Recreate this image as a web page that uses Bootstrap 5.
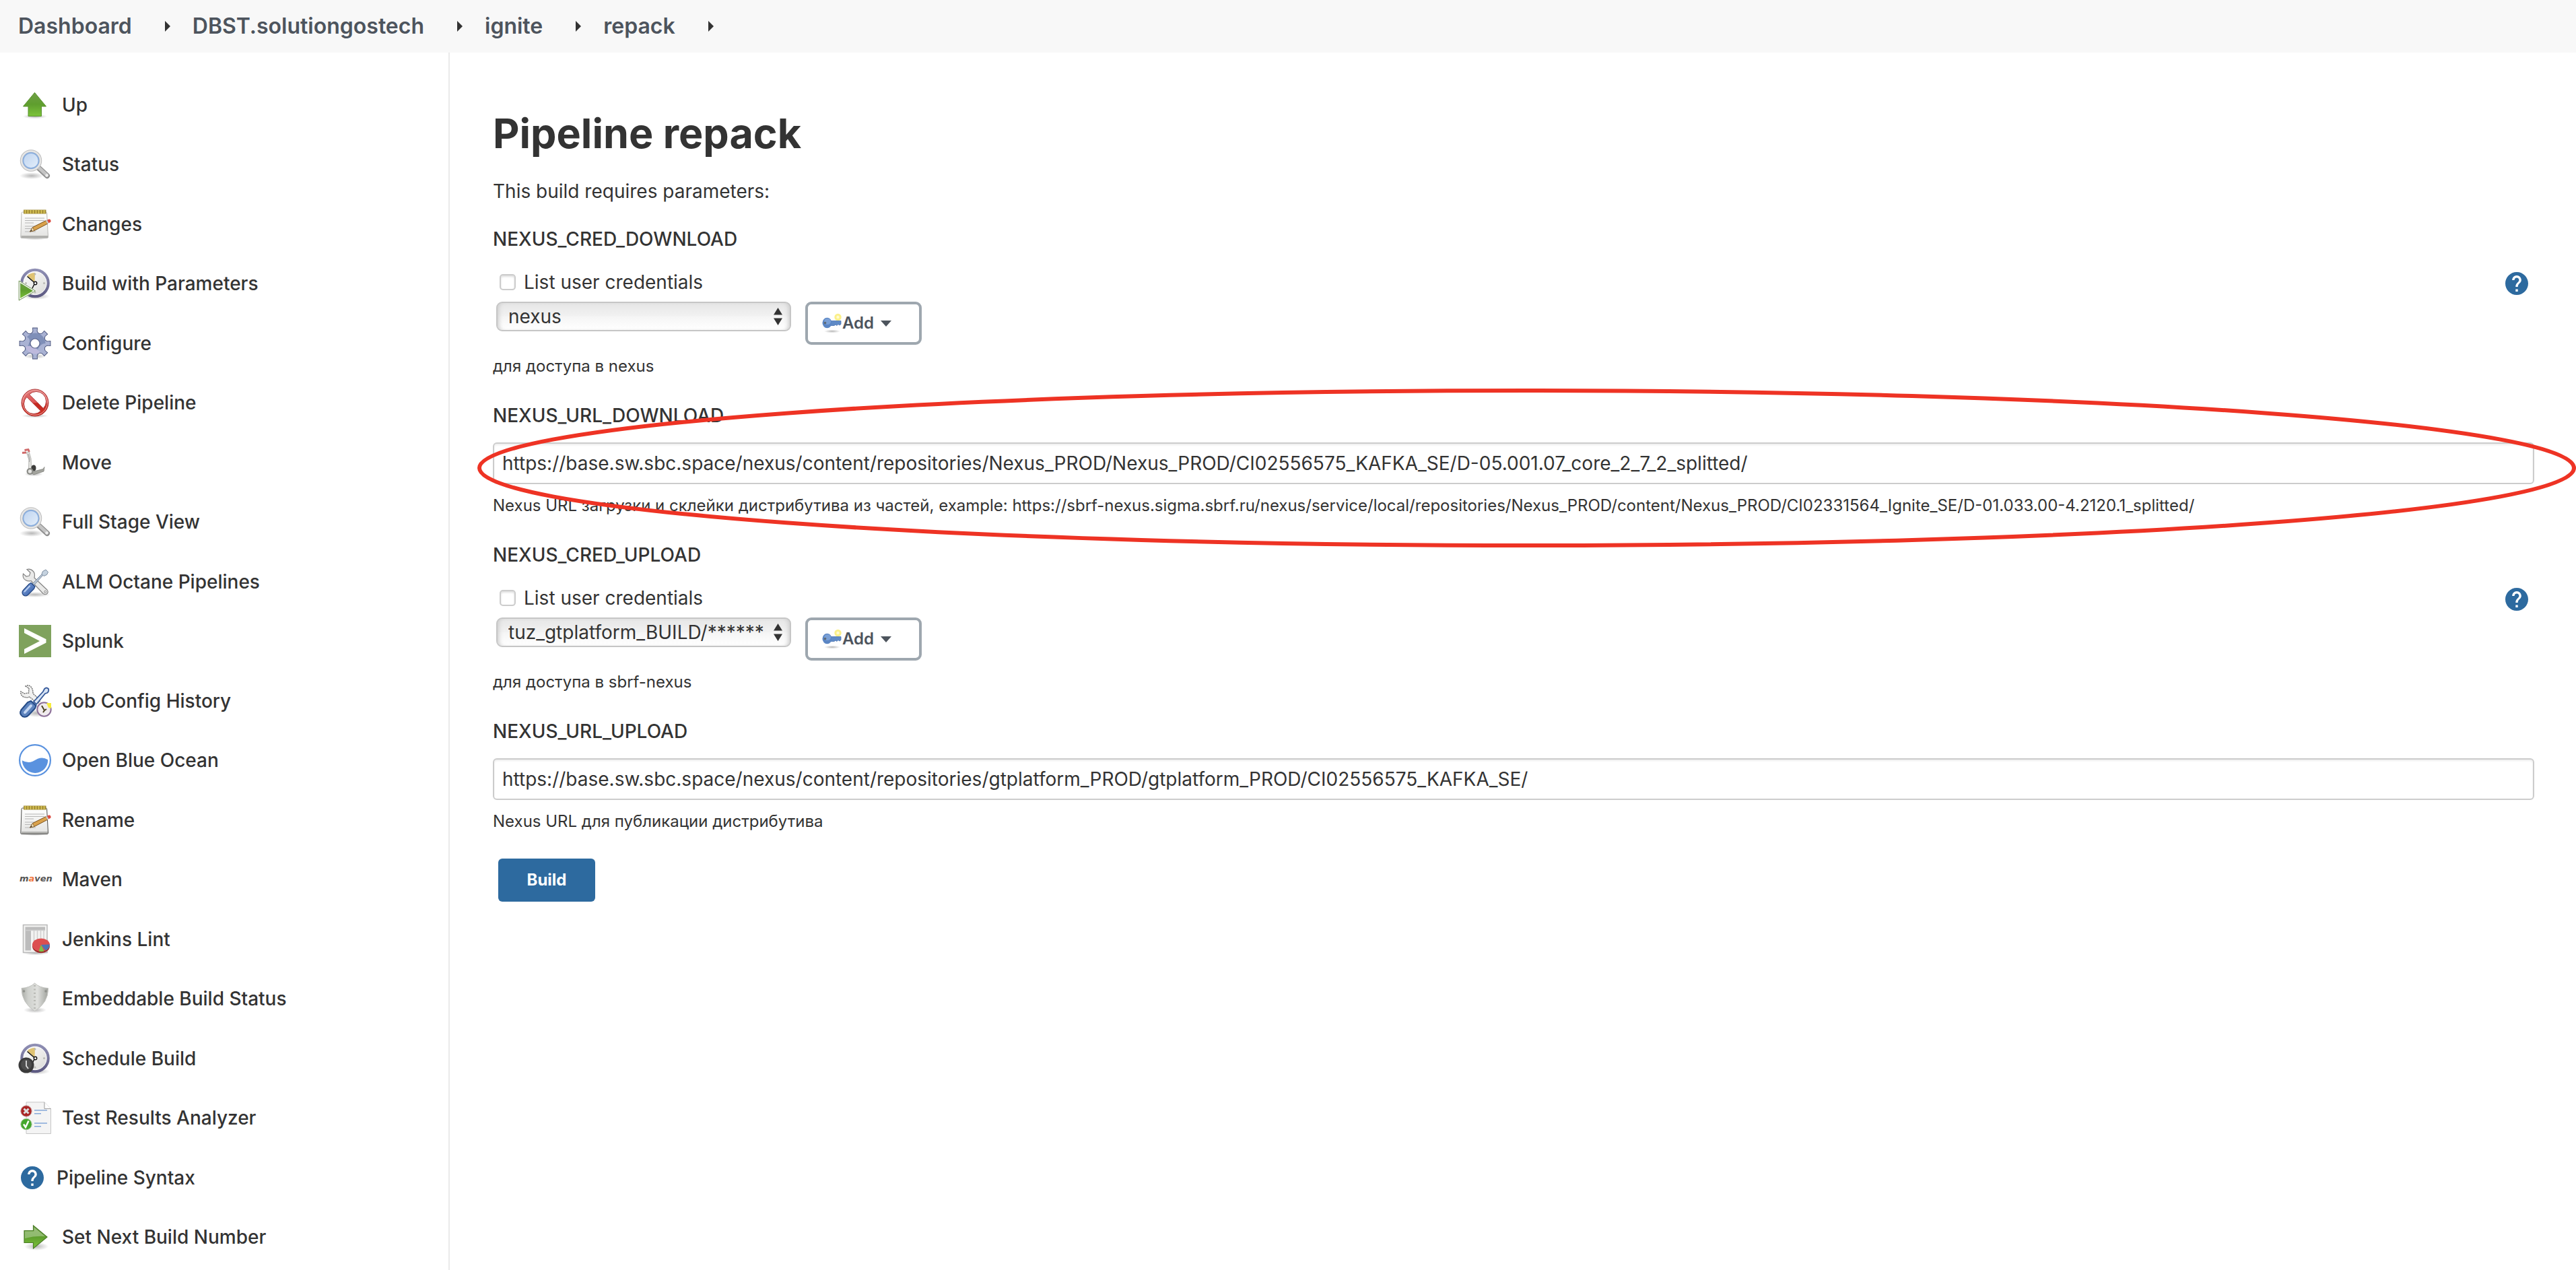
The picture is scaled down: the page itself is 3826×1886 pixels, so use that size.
<!DOCTYPE html>
<html lang="en">
<head>
<meta charset="utf-8">
<meta name="viewport" content="width=device-width, initial-scale=1">
<title>Pipeline repack</title>
<link href="https://cdn.jsdelivr.net/npm/bootstrap@5.3.0/dist/css/bootstrap.min.css" rel="stylesheet">
<style>
  body { font-family: Inter, "Noto Sans", sans-serif; font-size: 28px; line-height: 40px; color: #333; background: #fff; }
  a { color: inherit; text-decoration: none; }
  .topbar { background: #f8f8f8; height: 78px; padding: 0 27px; font-size: 32px; font-weight: 600; color: #4d545d; }
  .crumb-arrow { width: 8px; height: 16px; margin: 0 33px 0 49px; fill: #333; }
  .side-panel { flex: 0 0 668px; border-right: 2px solid #eaeaea; padding: 33px 0 0 28px; font-weight: 500; }
  .task { height: 88px; gap: 16px; }
  .task:nth-child(odd) { height: 89px; }
  .task-icon { width: 48px; height: 48px; flex: none; overflow: visible; }
  .task-icon-help { width: 40px; height: 34px; flex: none; }
  .main-panel { padding: 80px 62px 60px 64px; min-width: 0; }
  h1 { font-size: 61px; line-height: 80px; font-weight: 700; margin-bottom: 26px; }
  .intro { margin-bottom: 31px; }
  .param { margin-bottom: 35px; position: relative; }
  .param-name { display: block; font-weight: 500; margin-bottom: 20px; }
  .param-note { font-size: 24px; line-height: 36px; margin-top: 14px; }
  .cred-area { padding: 4px 9px 0 5px; }
  .cred-check { gap: 12px; margin-left: 5px; }
  .cred-check .form-check-input { width: 24px; height: 24px; margin: 0; border: 2px solid #ccc; border-radius: 5px; box-shadow: inset 0 2px 3px #ddd; }
  .cred-controls { gap: 21px; margin-top: 9px; }
  .select-box { position: relative; width: 438px; }
  .select-box select { appearance: none; width: 100%; height: 44px; padding: 0 36px 0 16px; border: 2px solid #c6c6c6; border-radius: 9px; color: #333; line-height: 36px;
    background: linear-gradient(#e6e6e6, #f2f2f2 50%, #f5f5f5 51%, #fff); box-shadow: inset 6px 0 6px -4px #ccc, inset -6px 0 6px -4px #ccc; }
  .select-arrows { position: absolute; right: 13px; top: 9px; width: 13px; height: 26px; pointer-events: none; fill: #333; }
  .add-btn { width: 173px; height: 64px; padding: 0 0 0 21px; border: 4px solid #9ea7af; border-radius: 9px; color: #4d545d; font-size: 24px; font-weight: 600; }
  .add-btn svg { flex: none; }
  .add-btn .caret { margin-left: 10px; }
  .help-link svg { display: block; margin-top: 5px; }
  .param .form-control { height: 62px; padding: 0 12px; font-size: 28px; line-height: 40px; color: #333; border: 2px solid #ccc; border-radius: 6px; box-shadow: inset 0 2px 3px #eee; }
  .highlight-ring { position: absolute; left: -23px; right: -62px; top: -20px; bottom: -44px; pointer-events: none; }
  .highlight-ring svg { width: 100%; height: 100%; display: block; }
  .highlight-ring ellipse { rx: calc(50% - 3px); ry: calc(50% - 3px); fill: none; stroke: #ee3324; stroke-width: 6px; }
  .build-btn { width: 144px; height: 64px; margin: 2px 0 0 8px; padding: 0; border: 0; border-radius: 6px; background: #2d6a9f; color: #fff; font-size: 24px; font-weight: 700; }
</style>
<script src="https://cdn.jsdelivr.net/npm/bootstrap@5.3.0/dist/js/bootstrap.bundle.min.js"></script>
</head>
<body class="d-flex flex-column min-vh-100">

<svg width="0" height="0" class="position-absolute" aria-hidden="true">
  <defs>
    <linearGradient id="gGreen" x1="0" y1="0" x2="0" y2="1"><stop offset="0" stop-color="#6f9f45"/><stop offset=".5" stop-color="#5f9e2e"/><stop offset="1" stop-color="#7cc43a"/></linearGradient>
    <linearGradient id="gLens" x1="0" y1="0" x2="1" y2="1"><stop offset="0" stop-color="#b9d0ee"/><stop offset="1" stop-color="#e9f2fc"/></linearGradient>
    <linearGradient id="gPaper" x1="0" y1="0" x2="0" y2="1"><stop offset="0" stop-color="#fff"/><stop offset="1" stop-color="#e2e2e0"/></linearGradient>
    <linearGradient id="gRing" x1="0" y1="0" x2="0" y2="1"><stop offset="0" stop-color="#8f8fb4"/><stop offset="1" stop-color="#5d5a82"/></linearGradient>
    <linearGradient id="gFace" x1="0" y1="0" x2="1" y2="1"><stop offset="0" stop-color="#fff"/><stop offset="1" stop-color="#d9d9d6"/></linearGradient>
    <linearGradient id="gRed" x1="0" y1="0" x2="0" y2="1"><stop offset="0" stop-color="#e07a7a"/><stop offset=".5" stop-color="#d55"/><stop offset=".52" stop-color="#c4281f"/><stop offset="1" stop-color="#cc2f25"/></linearGradient>
    <linearGradient id="gShield" x1="0" y1="0" x2="1" y2="0"><stop offset="0" stop-color="#a9aba6"/><stop offset=".25" stop-color="#cfd1cd"/><stop offset=".6" stop-color="#dfe0dd"/><stop offset="1" stop-color="#9fa19c"/></linearGradient>
    <linearGradient id="gDriver" x1="0" y1="0" x2="1" y2="1"><stop offset="0" stop-color="#86a8de"/><stop offset="1" stop-color="#2f58a4"/></linearGradient>
    <radialGradient id="gShade"><stop offset="0" stop-color="#000" stop-opacity=".28"/><stop offset="1" stop-color="#000" stop-opacity="0"/></radialGradient>
  </defs>
  <symbol id="i-magnifier" viewBox="0 0 48 48">
    <ellipse cx="19" cy="41" rx="18" ry="5" fill="url(#gShade)"/>
    <path d="M28.500 28.500 42 41" stroke="#8f8f8f" stroke-width="8" stroke-linecap="round"/>
    <path d="M28.500 28 41.500 40" stroke="#c4c4c4" stroke-width="5" stroke-linecap="round"/>
    <circle cx="41.500" cy="40.500" r="2.200" fill="#eee"/>
    <circle cx="18" cy="18.500" r="14" fill="url(#gLens)" stroke="#bdbdbd" stroke-width="4.500"/>
    <circle cx="18" cy="18.500" r="14" fill="none" stroke="#e6e6e6" stroke-width="2.500"/>
    <circle cx="18" cy="18.500" r="11.500" fill="none" stroke="#8aaede" stroke-width="1.800"/>
  </symbol>
  <symbol id="i-notepad" viewBox="0 0 48 48">
    <ellipse cx="24" cy="44.500" rx="20" ry="3" fill="url(#gShade)"/>
    <path d="M5.500 6h34.500q1.500 0 1.600 1.500L43.500 43q0 1.500-1.500 1.500H4.200q-1.500 0-1.400-1.500L4 7.500Q4 6 5.500 6z" fill="url(#gPaper)" stroke="currentColor"/>
    <path d="M3.500 41h39.500l.2 3H3.500z" fill="#b0b0ad"/>
    <path d="M9 15h29M9 18.500h29M9 22h13M9 27h20M9 30.500h11M9 35h16" stroke="#b5b5b5" stroke-width="1.200"/>
    <path d="M7 2.500h33.500V8.500H7z" fill="#a08a35"/>
    <path d="M9.500 3v5M13.500 3v5M17.500 3v5M21.500 3v5M25.500 3v5M29.500 3v5M33.500 3v5M37.500 3v5" stroke="#dcc95a" stroke-width="1.700"/>
    <path d="M16.500 35 20.500 28.500 40.500 18.500 43 23 23 33.500z" fill="#d9a14b" stroke="#7c5420" stroke-width="1"/>
    <path d="M16.500 35 20.500 28.500 23 33.500z" fill="#ecd9b0" stroke="#7c5420" stroke-width=".700"/>
    <path d="M16.500 35l2.200-3 .9 1.800z" fill="#333"/>
    <path d="M40 18.700l2-1 2.300 4.500-2 1z" fill="#c9c9c9"/>
    <path d="M42 17.700l2.500-1.200q2.500-.5 3 2t-1.200 2.800l-2 .9z" fill="#dc4a3f"/>
  </symbol>
  <symbol id="i-clock" viewBox="0 0 48 48">
    <ellipse cx="26" cy="43" rx="20" ry="5" fill="url(#gShade)"/>
    <circle cx="24" cy="23.500" r="19.500" fill="url(#gFace)" stroke="url(#gRing)" stroke-width="4.500"/>
    <circle cx="24" cy="23.500" r="17.200" fill="none" stroke="#fff" stroke-width="1"/>
    <path d="M23.500 22.500 12.500 12.500Q17 8 24 8z" fill="#dfc373"/>
    <circle cx="24" cy="10" r="1.500" fill="#b9b9b5"/><circle cx="37.500" cy="23.500" r="1.500" fill="#b9b9b5"/><circle cx="24" cy="37" r="1.500" fill="#b9b9b5"/><circle cx="10.500" cy="23.500" r="1.500" fill="#b9b9b5"/>
    <path d="M23.500 23 12.500 13.500M23.500 24 19.500 32" stroke="#111" stroke-width="1.500"/>
    <circle cx="24.500" cy="23.500" r="2.200" fill="#fff" stroke="#111" stroke-width="1.400"/>
  </symbol>
  <symbol id="i-tools" viewBox="0 0 48 48">
    <ellipse cx="24" cy="43" rx="23" ry="4" fill="url(#gShade)"/>
    <path d="M12 5.500 17 10.500 15.500 15 11 16 6.500 12Q5 18.500 10 21.500 14 23.800 18 22.500L36 41.500Q39.500 44 42 41.500 44.300 39 42 36L23 18Q24.500 12 21.500 8.500 17.500 4.200 12 5.500z" fill="#e9e9e8" stroke="#858585" stroke-width="1.200"/>
    <circle cx="39.200" cy="38.800" r="1.500" fill="#fff" stroke="#858585"/>
    <path d="M20 27 34.500 12.500 36 14 22.500 29z" fill="#b9c6d4" stroke="#7d8da0" stroke-width="1"/>
    <path d="M34 12.500 35.500 8.500 40 6 43.500 9.500 41.500 13.500 37 15.500z" fill="#c5d2df" stroke="#7d8da0" stroke-width="1"/>
    <path d="M18 25.500 24 31 22.500 34.500 13.500 43.500Q10 46.500 6.500 43.500 3.500 40 6.500 36.500L15 27.500z" fill="url(#gDriver)" stroke="#20437f" stroke-width="1.200"/>
    <path d="M16 30.500 8.500 38.500" stroke="#b7cdf0" stroke-width="2" stroke-linecap="round"/>
  </symbol>
  <symbol id="i-help" viewBox="2 2 20 20">
    <path fill="#2d6a9f" d="M12 2C6.480 2 2 6.480 2 12s4.480 10 10 10 10-4.480 10-10S17.520 2 12 2zm1 17h-2v-2h2v2zm2.070-7.750l-.9.920C13.450 12.900 13 13.500 13 15h-2v-.5c0-1.100.450-2.100 1.170-2.830l1.240-1.260c.370-.360.590-.860.590-1.410 0-1.100-.9-2-2-2s-2 .9-2 2H8c0-2.210 1.790-4 4-4s4 1.790 4 4c0 .880-.360 1.680-.930 2.250z"/>
  </symbol>
  <symbol id="i-key" viewBox="0 0 30 30">
    <ellipse cx="15" cy="27" rx="12" ry="2.500" fill="url(#gShade)"/>
    <circle cx="23.500" cy="6" r="5.200" fill="#fbf08a"/><circle cx="23.500" cy="6" r="2.200" fill="#fffbd0"/>
    <path d="M12 11.500h16v5l-2 1.500-2-1.500-2 2-2-1.500-2 1.500H12z" fill="#5f8ac6" stroke="#4a74b3" stroke-width=".800"/>
    <ellipse cx="7.500" cy="14.500" rx="7" ry="7.700" fill="#5b86c4"/>
    <ellipse cx="8" cy="12.500" rx="5" ry="4.500" fill="#7aa0d6"/>
    <circle cx="4.500" cy="14.500" r="1.800" fill="#5d6a75"/>
  </symbol>
  <symbol id="i-arrows" viewBox="0 0 13 26"><path d="M6.500 0 13 10.500H0zM6.500 26 0 15.500H13z"/></symbol>
  <symbol id="i-crumb" viewBox="0 0 8 16"><path d="M0 0 8 8 0 16z"/></symbol>
</svg>

<header class="topbar">
  <nav class="d-flex align-items-center h-100" aria-label="Breadcrumb">
    <a href="#">Dashboard</a><svg class="crumb-arrow"><use href="#i-crumb"/></svg>
    <a href="#">DBST.solutiongostech</a><svg class="crumb-arrow"><use href="#i-crumb"/></svg>
    <a href="#">ignite</a><svg class="crumb-arrow"><use href="#i-crumb"/></svg>
    <a href="#">repack</a><svg class="crumb-arrow"><use href="#i-crumb"/></svg>
  </nav>
</header>

<div class="d-flex flex-grow-1">
  <aside class="side-panel">
    <nav class="d-flex flex-column" aria-label="Tasks">
      <a href="#" class="task d-flex align-items-center">
        <svg class="task-icon" viewBox="0 0 48 48"><ellipse cx="24" cy="41" rx="18" ry="3.500" fill="url(#gShade)"/><path d="M23.500 5.500 40.500 26H33.500V40.500H14V26H6.500z" fill="url(#gGreen)" stroke="#5b9330" stroke-width="1"/></svg>
        <span>Up</span></a>
      <a href="#" class="task d-flex align-items-center"><svg class="task-icon"><use href="#i-magnifier"/></svg><span>Status</span></a>
      <a href="#" class="task d-flex align-items-center"><svg class="task-icon" color="#b9b9b6"><use href="#i-notepad"/></svg><span>Changes</span></a>
      <a href="#" class="task d-flex align-items-center">
        <svg class="task-icon" viewBox="0 0 48 48"><use href="#i-clock" width="48" height="48"/><path d="M.8 21 23.500 35 .8 48z" fill="url(#gGreen)" stroke="#fff" stroke-width="2.500"/><path d="M.2 20 24.500 35 .2 49z" fill="none" stroke="#477326" stroke-width=".800"/></svg>
        <span>Build with Parameters</span></a>
      <a href="#" class="task d-flex align-items-center">
        <svg class="task-icon" viewBox="0 0 48 48">
          <defs><g id="gearShape"><circle cx="24" cy="24" r="15.500"/><path id="tooth" d="M18.500 11 21.300 6 21 1.500H27L26.700 6 29.500 11z"/><use href="#tooth" transform="rotate(45 24 24)"/><use href="#tooth" transform="rotate(90 24 24)"/><use href="#tooth" transform="rotate(135 24 24)"/><use href="#tooth" transform="rotate(180 24 24)"/><use href="#tooth" transform="rotate(225 24 24)"/><use href="#tooth" transform="rotate(270 24 24)"/><use href="#tooth" transform="rotate(315 24 24)"/></g></defs>
          <ellipse cx="24" cy="43" rx="17" ry="4" fill="url(#gShade)"/>
          <use href="#gearShape" fill="#454f78" stroke="#454f78" stroke-width="1.800"/><use href="#gearShape" fill="#a9b2d3"/>
          <path d="M24 8.500A15.500 15.500 0 0 1 39.500 24Q32 24 28 33 22 27 12 30 20 18 12 14.500 17 8.500 24 8.500z" fill="#7f8fb8"/>
          <path d="M9.500 29Q18 25 27 33L32 37Q28 40 24 39.500 14 39.500 9.500 29z" fill="#bdb9dc"/>
          <circle cx="24" cy="24" r="7" fill="#fff" stroke="#5d668e" stroke-width="1.200"/></svg>
        <span>Configure</span></a>
      <a href="#" class="task d-flex align-items-center">
        <svg class="task-icon" viewBox="0 0 48 48"><ellipse cx="24" cy="43.500" rx="20" ry="3" fill="url(#gShade)"/><path fill-rule="evenodd" d="M24 4a20 20 0 1 0 0 40a20 20 0 1 0 0-40zM15.500 11.800 36.300 32.500A14.200 14.200 0 0 0 15.500 11.800zM11.800 15.500A14.200 14.200 0 0 0 32.500 36.300z" fill="url(#gRed)" stroke="#a83030" stroke-width=".900"/><circle cx="24" cy="24" r="18.300" fill="none" stroke="#f2b5b0" stroke-width=".900"/></svg>
        <span>Delete Pipeline</span></a>
      <a href="#" class="task d-flex align-items-center">
        <svg class="task-icon" viewBox="0 0 48 48"><ellipse cx="22" cy="41" rx="14" ry="3.500" fill="url(#gShade)"/><path d="M18 38 36 33.500 38 30.500 37 37 22 42z" fill="#a3a49e" stroke="#82837d" stroke-width=".800"/><path d="M11.500 9 15 7.500 18 18 18.500 33 14.500 34.500 15 20z" fill="#e6e6e3" stroke="#b3b3af"/><path d="M14 11l2 8-.5 4" stroke="#999" fill="none"/><path d="M5 9.500 11 9M8.500 5.500 14 4.500 15.500 8" stroke="#cf6a6a" stroke-width="2.800" fill="none"/><ellipse cx="22" cy="32" rx="3.500" ry="4.500" fill="#3d3d3b"/><circle cx="16.500" cy="37" r="5" fill="#8c8d88"/><circle cx="16.500" cy="37" r="2.700" fill="#e5e5e2"/></svg>
        <span>Move</span></a>
      <a href="#" class="task d-flex align-items-center"><svg class="task-icon"><use href="#i-magnifier"/></svg><span>Full Stage View</span></a>
      <a href="#" class="task d-flex align-items-center"><svg class="task-icon"><use href="#i-tools"/></svg><span>ALM Octane Pipelines</span></a>
      <a href="#" class="task d-flex align-items-center">
        <svg class="task-icon" viewBox="0 0 48 48"><rect width="48" height="48" fill="#7fa25d"/><path d="M8 5 40.500 21.300V26.500L8 43V36L31 24 8 12z" fill="#fff"/></svg>
        <span>Splunk</span></a>
      <a href="#" class="task d-flex align-items-center">
        <svg class="task-icon" viewBox="0 0 48 48"><ellipse cx="26" cy="42" rx="18" ry="6" fill="url(#gShade)"/><path d="M10 2 15 5 14.500 12 8 13 3 10Q2 15 7 18 12 19.500 16 18L28 28 32 23 21 13Q21 6 18 3 14-1 10 2z" fill="#f1f1f0" stroke="#707070" stroke-width="1.500" stroke-dasharray="2 1"/><path d="M22 25 36 10 38 6Q41 3 44 6 45 10 42 12L39 13 26 29z" fill="#d7e4f5" stroke="#35599a" stroke-width="1.800"/><path d="M18 24 25.500 31 24 35 14.500 45Q11 49 5.500 47 0 43 3.500 37L13 26z" fill="#5d83bd" stroke="#234a86" stroke-width="2"/><path d="M18 31 9 41" stroke="#c3d6f2" stroke-width="4" stroke-linecap="round"/><circle cx="37.500" cy="36.500" r="10.200" fill="#f0ebee" stroke="#8d7099" stroke-width="2"/><path d="M41 27h7v8l-4-1z" fill="#f7ec3c"/><path d="M34 31l4 7M38 38l-2 3M38 38l3-2" stroke="#4a4223" stroke-width="2"/></svg>
        <span>Job Config History</span></a>
      <a href="#" class="task d-flex align-items-center">
        <svg class="task-icon" viewBox="0 0 48 48"><circle cx="24" cy="24" r="22.900" fill="#fff" stroke="#5a92df" stroke-width="2.200"/><path d="M4.800 24.200Q13 29 20.500 25.800L28 21.800Q36 18.600 43.200 23.200A19.200 19.200 0 0 1 4.800 24.200z" fill="#5a92df"/></svg>
        <span>Open Blue Ocean</span></a>
      <a href="#" class="task d-flex align-items-center"><svg class="task-icon" color="#4c4c4a"><use href="#i-notepad"/></svg><span>Rename</span></a>
      <a href="#" class="task d-flex align-items-center">
        <svg class="task-icon" viewBox="0 0 48 48"><text x="1" y="27" font-family="DejaVu Sans, sans-serif" font-size="13" font-weight="700" font-style="italic" fill="#555">m<tspan fill="#f0763f">a</tspan>ven</text></svg>
        <span>Maven</span></a>
      <a href="#" class="task d-flex align-items-center">
        <svg class="task-icon" viewBox="0 0 48 48"><ellipse cx="25" cy="44.500" rx="19" ry="3" fill="url(#gShade)"/><rect x="6.500" y="2.500" width="35.500" height="41" fill="#f3f3f2" stroke="#b9b9b9" stroke-width="1.500"/><path d="M9.500 5.500H39V10.500H18V40.500H9.500z" fill="#bcbcbc"/><path d="M22.500 10v30M27.500 10v14M32.500 10v12M37 10v13M9.500 10.500H39" stroke="#cfcfcf" stroke-width="1.500"/><ellipse cx="33" cy="34" rx="13" ry="10.200" fill="#9c2a2a"/><ellipse cx="33" cy="32.300" rx="13" ry="9.800" fill="#dc4f50"/><path d="M33 32 46 31.500Q45.500 38 39.500 40.500z" fill="#4d74b5"/><path d="M33 32 37.500 41.500Q33 43 29.500 41.500z" fill="#7cc24a"/></svg>
        <span>Jenkins Lint</span></a>
      <a href="#" class="task d-flex align-items-center">
        <svg class="task-icon" viewBox="0 0 48 48"><ellipse cx="24" cy="41" rx="17" ry="4.500" fill="url(#gShade)"/><path d="M23.500 1Q31 8 43.500 8.500 44 30 23.500 42.500 4 30 4 8.500 16 8 23.500 1z" fill="url(#gShield)" stroke="#c4c5c1"/><path d="M23.500 4v38" stroke="#b9bab5" stroke-width="3" stroke-dasharray="2 3.500"/><circle cx="7.500" cy="13" r="1.800" fill="#8e908b"/><circle cx="40" cy="13" r="1.800" fill="#8e908b"/></svg>
        <span>Embeddable Build Status</span></a>
      <a href="#" class="task d-flex align-items-center">
        <svg class="task-icon" viewBox="0 0 48 48"><use href="#i-clock" width="48" height="48"/><circle cx="11" cy="34" r="11.500" fill="#3a3a3a"/><circle cx="11" cy="33" r="8" fill="#4e4e4e"/><path d="M11 27v8l3 4" fill="none" stroke="#ddd" stroke-width="1.800"/></svg>
        <span>Schedule Build</span></a>
      <a href="#" class="task d-flex align-items-center">
        <svg class="task-icon" viewBox="0 0 48 48"><path d="M11 .8H38L47.500 10.500V47.500H11z" fill="#f4f4f4" stroke="#c6c6c6"/><path d="M38 .8V10.500H47.500" fill="#fff" stroke="#9b9b9b"/><path d="M23 12.700H42M23 32H42M23 17.700H33M23 36.800H33" stroke="#84a7d8" stroke-width="1.600"/><circle cx="11" cy="14" r="8.200" fill="#a92424" stroke="#c9a5a5"/><path d="M7.500 10.500l7 7M14.500 10.500l-7 7" stroke="#ddd" stroke-width="3"/><circle cx="11" cy="33.500" r="8.200" fill="#44a72c" stroke="#a9c7a0"/><path d="M7 33.500l3 4.500L14.500 28.500" fill="none" stroke="#fff" stroke-width="2.500"/></svg>
        <span>Test Results Analyzer</span></a>
      <a href="#" class="task d-flex align-items-center"><svg class="task-icon-help"><use href="#i-help"/></svg><span>Pipeline Syntax</span></a>
      <a href="#" class="task d-flex align-items-center">
        <svg class="task-icon" viewBox="0 0 48 48"><ellipse cx="26" cy="38" rx="18" ry="6" fill="url(#gShade)"/><path d="M8 14.500H21.500V7L42 24 21.500 41V32.500H8z" fill="url(#gGreen)" stroke="#4c7d29" stroke-width="1.200"/><path d="M9 15.500H22.500V9.500L39 23Q24 22 9 26z" fill="#fff" fill-opacity=".3"/></svg>
        <span>Set Next Build Number</span></a>
    </nav>
  </aside>

  <main class="main-panel flex-grow-1">
    <h1>Pipeline repack</h1>
    <p class="intro">This build requires parameters:</p>
    <form>
      <section class="param">
        <label class="param-name" for="credDownload">NEXUS_CRED_DOWNLOAD</label>
        <div class="cred-area d-flex justify-content-between align-items-start">
          <div>
            <div class="cred-check d-flex align-items-center">
              <input class="form-check-input" type="checkbox" id="listDownload">
              <label for="listDownload">List user credentials</label>
            </div>
            <div class="cred-controls d-flex align-items-start">
              <div class="select-box">
                <select id="credDownload"><option>nexus</option></select>
                <svg class="select-arrows"><use href="#i-arrows"/></svg>
              </div>
              <button type="button" class="btn add-btn d-flex align-items-center">
                <svg width="30" height="30"><use href="#i-key"/></svg>Add<svg width="16" height="9" class="caret" viewBox="0 0 16 9" fill="#4d545d"><path d="M0 0H16L8 9z"/></svg>
              </button>
            </div>
          </div>
          <a href="#" class="help-link" aria-label="Help"><svg width="34" height="34"><use href="#i-help"/></svg></a>
        </div>
        <div class="param-note">для доступа в nexus</div>
      </section>

      <section class="param">
        <label class="param-name" for="urlDownload">NEXUS_URL_DOWNLOAD</label>
        <input class="form-control" type="text" id="urlDownload" value="https://base.sw.sbc.space/nexus/content/repositories/Nexus_PROD/Nexus_PROD/CI02556575_KAFKA_SE/D-05.001.07_core_2_7_2_splitted/">
        <div class="param-note">Nexus URL загрузки и склейки дистрибутива из частей, example: https://sbrf-nexus.sigma.sbrf.ru/nexus/service/local/repositories/Nexus_PROD/content/Nexus_PROD/CI02331564_Ignite_SE/D-01.033.00-4.2120.1_splitted/</div>
        <div class="highlight-ring"><svg><ellipse cx="50%" cy="50%"/></svg></div>
      </section>

      <section class="param">
        <label class="param-name" for="credUpload">NEXUS_CRED_UPLOAD</label>
        <div class="cred-area d-flex justify-content-between align-items-start">
          <div>
            <div class="cred-check d-flex align-items-center">
              <input class="form-check-input" type="checkbox" id="listUpload">
              <label for="listUpload">List user credentials</label>
            </div>
            <div class="cred-controls d-flex align-items-start">
              <div class="select-box">
                <select id="credUpload"><option>tuz_gtplatform_BUILD/******</option></select>
                <svg class="select-arrows"><use href="#i-arrows"/></svg>
              </div>
              <button type="button" class="btn add-btn d-flex align-items-center">
                <svg width="30" height="30"><use href="#i-key"/></svg>Add<svg width="16" height="9" class="caret" viewBox="0 0 16 9" fill="#4d545d"><path d="M0 0H16L8 9z"/></svg>
              </button>
            </div>
          </div>
          <a href="#" class="help-link" aria-label="Help"><svg width="34" height="34"><use href="#i-help"/></svg></a>
        </div>
        <div class="param-note">для доступа в sbrf-nexus</div>
      </section>

      <section class="param">
        <label class="param-name" for="urlUpload">NEXUS_URL_UPLOAD</label>
        <input class="form-control" type="text" id="urlUpload" value="https://base.sw.sbc.space/nexus/content/repositories/gtplatform_PROD/gtplatform_PROD/CI02556575_KAFKA_SE/">
        <div class="param-note">Nexus URL для публикации дистрибутива</div>
      </section>

      <button type="submit" class="btn build-btn">Build</button>
    </form>
  </main>
</div>
</body>
</html>
